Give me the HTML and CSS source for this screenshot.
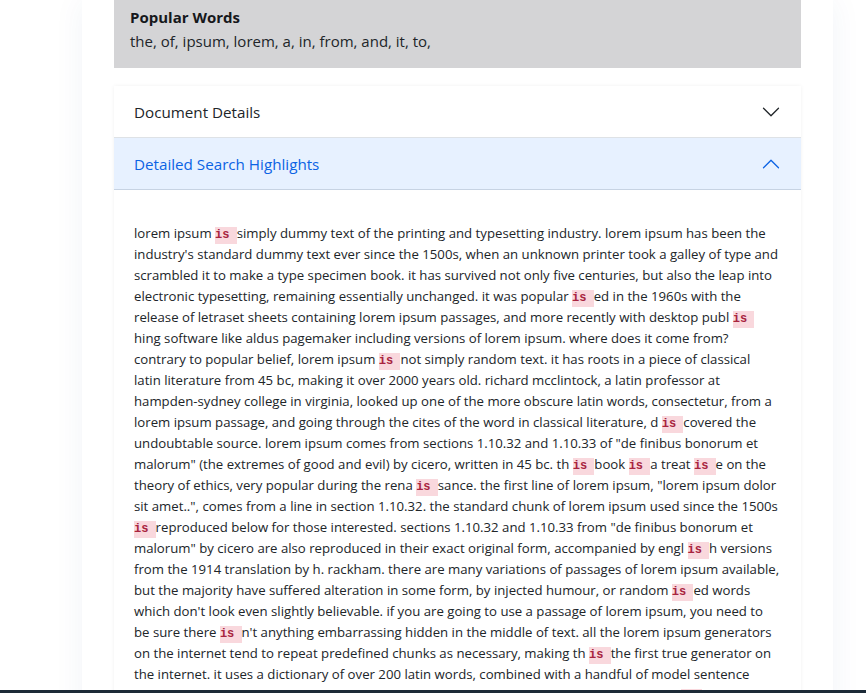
FILE: index.html
```html
<!DOCTYPE html>
<html lang="en">
<head>
<meta charset="utf-8">
<title>Search Highlights</title>
<link rel="stylesheet" href="styles.css">
</head>
<body>
<div class="page">
  <main class="panel">
    <section class="popular">
      <h2 class="popular-title">Popular Words</h2>
      <p class="popular-list">the, of, ipsum, lorem, a, in, from, and, it, to,</p>
    </section>
    <div class="accordion">
      <div class="acc-item">
        <button class="acc-btn" type="button">
          <span>Document Details</span>
          <svg class="chev" viewBox="0 0 16 16" width="20" height="20"><path fill="currentColor" fill-rule="evenodd" d="M1.646 4.646a.5.5 0 0 1 .708 0L8 10.293l5.646-5.647a.5.5 0 0 1 .708.708l-6 6a.5.5 0 0 1-.708 0l-6-6a.5.5 0 0 1 0-.708z"/></svg>
        </button>
      </div>
      <div class="acc-item">
        <button class="acc-btn active" type="button">
          <span>Detailed Search Highlights</span>
          <svg class="chev up" viewBox="0 0 16 16" width="20" height="20"><path fill="currentColor" fill-rule="evenodd" d="M1.646 4.646a.5.5 0 0 1 .708 0L8 10.293l5.646-5.647a.5.5 0 0 1 .708.708l-6 6a.5.5 0 0 1-.708 0l-6-6a.5.5 0 0 1 0-.708z"/></svg>
        </button>
        <div class="acc-body">
          <p class="text">lorem ipsum <code class="hl">is </code>simply dummy text of the printing and typesetting industry. lorem ipsum has been the<br>
industry's standard dummy text ever since the 1500s, when an unknown printer took a galley of type and<br>
scrambled it to make a type specimen book. it has survived not only five centuries, but also the leap into<br>
electronic typesetting, remaining essentially unchanged. it was popular <code class="hl">is </code>ed in the 1960s with the<br>
release of letraset sheets containing lorem ipsum passages, and more recently with desktop publ <code class="hl">is </code><br>
hing software like aldus pagemaker including versions of lorem ipsum. where does it come from?<br>
contrary to popular belief, lorem ipsum <code class="hl">is </code>not simply random text. it has roots in a piece of classical<br>
latin literature from 45 bc, making it over 2000 years old. richard mcclintock, a latin professor at<br>
hampden-sydney college in virginia, looked up one of the more obscure latin words, consectetur, from a<br>
lorem ipsum passage, and going through the cites of the word in classical literature, d <code class="hl">is </code>covered the<br>
undoubtable source. lorem ipsum comes from sections 1.10.32 and 1.10.33 of "de finibus bonorum et<br>
malorum" (the extremes of good and evil) by cicero, written in 45 bc. th <code class="hl">is </code>book <code class="hl">is </code>a treat <code class="hl">is </code>e on the<br>
theory of ethics, very popular during the rena <code class="hl">is </code>sance. the first line of lorem ipsum, "lorem ipsum dolor<br>
sit amet..", comes from a line in section 1.10.32. the standard chunk of lorem ipsum used since the 1500s<br>
<code class="hl">is </code>reproduced below for those interested. sections 1.10.32 and 1.10.33 from "de finibus bonorum et<br>
malorum" by cicero are also reproduced in their exact original form, accompanied by engl <code class="hl">is </code>h versions<br>
from the 1914 translation by h. rackham. there are many variations of passages of lorem ipsum available,<br>
but the majority have suffered alteration in some form, by injected humour, or random <code class="hl">is </code>ed words<br>
which don't look even slightly believable. if you are going to use a passage of lorem ipsum, you need to<br>
be sure there <code class="hl">is </code>n't anything embarrassing hidden in the middle of text. all the lorem ipsum generators<br>
on the internet tend to repeat predefined chunks as necessary, making th <code class="hl">is </code>the first true generator on<br>
the internet. it uses a dictionary of over 200 latin words, combined with a handful of model sentence<br>
structures, to generate lorem ipsum which looks reasonable. the generated lorem ipsum <code class="hl">is </code>therefore always free from</p>
        </div>
      </div>
    </div>
  </main>
</div>
<div class="bottom-bar"></div>
</body>
</html>
```

FILE: styles.css
```css
* { box-sizing: border-box; }

html, body {
  margin: 0;
  height: 100%;
}

body {
  background: #ffffff;
  font-family: "Open Sans", "Noto Sans", sans-serif;
  color: #212529;
  overflow: hidden;
}

.page {
  display: flex;
  padding-left: 82px;
}

.panel {
  width: 751px;
  min-height: 100vh;
  background: #ffffff;
  padding: 0 32px;
  box-shadow: 0 0 30px rgba(40, 70, 130, 0.06);
}

.popular {
  background: #d4d4d6;
  padding: 5px 16px 15px;
}

.popular-title {
  margin: 0;
  font-size: 15px;
  font-weight: 700;
  line-height: 24px;
  color: #16181b;
}

.popular-list {
  margin: 0;
  font-size: 15px;
  line-height: 24px;
  color: #212529;
}

.accordion {
  margin-top: 18px;
  background: #ffffff;
  box-shadow: 0 0 4px rgba(0, 0, 0, 0.06);
}

.acc-item + .acc-item {
  border-top: 1px solid #dee2e6;
}

.acc-btn {
  display: flex;
  align-items: center;
  justify-content: space-between;
  width: 100%;
  height: 51px;
  padding: 0 20px;
  border: 0;
  background: #ffffff;
  font-family: inherit;
  font-size: 15.2px;
  color: #212529;
  text-align: left;
}

.acc-btn.active {
  background: #e7f1ff;
  color: #0c63e4;
  border-bottom: 1px solid #c7d3e3;
  height: 52px;
}

.chev {
  flex: none;
  display: block;
}

.chev.up {
  transform: rotate(180deg);
}

.acc-body {
  padding: 33px 20px 16px;
}

.text {
  margin: 0;
  font-size: 13.2px;
  line-height: 21px;
  white-space: nowrap;
  color: #212529;
}

.hl {
  font-family: "Liberation Mono", "DejaVu Sans Mono", monospace;
  font-size: 12px;
  line-height: 1;
  font-weight: 700;
  color: #a8243f;
  background: #f9d8dd;
  padding: 1px 0 2px;
  white-space: pre;
}

.bottom-bar {
  position: fixed;
  left: 0;
  right: 0;
  bottom: 0;
  height: 3px;
  background: #1c2a37;
}
```
